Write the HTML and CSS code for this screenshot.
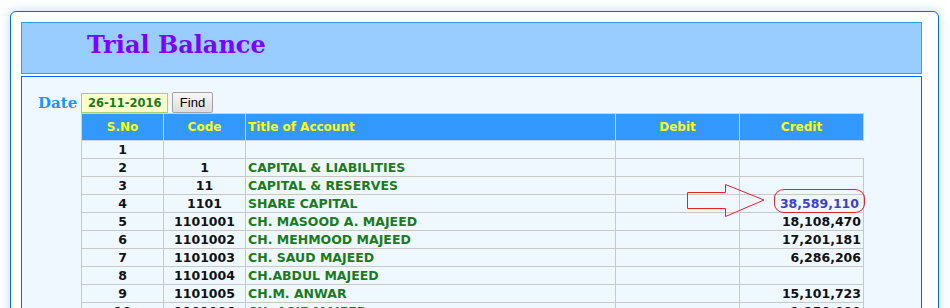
FILE: index.html
```html
<!DOCTYPE html>
<html lang="en">
<head>
    <meta charset="UTF-8">
    <meta name="viewport" content="width=device-width, initial-scale=1.0">
    <title>Trial Balance</title>
    <link rel="stylesheet" href="styles.css">
</head>
<body>
    <div class="frame">
        <div class="page-head">Trial Balance</div>

        <div class="panel">
            <div class="toolbar">
                <label for="date" class="date-label">Date</label>
                <input type="text" id="date" class="date-input" value="26-11-2016">
                <button class="btn-find">Find</button>
            </div>

            <table class="ledger">
                <thead>
                    <tr>
                        <th class="c-no">S.No</th>
                        <th class="c-code">Code</th>
                        <th class="c-title">Title of Account</th>
                        <th class="c-amt">Debit</th>
                        <th class="c-amt">Credit</th>
                    </tr>
                </thead>
                <tbody>
                    <tr><td class="num">1</td><td></td><td></td><td></td></tr>
                    <tr><td class="num">2</td><td class="num">1</td><td class="title">CAPITAL &amp; LIABILITIES</td><td></td><td></td></tr>
                    <tr><td class="num">3</td><td class="num">11</td><td class="title">CAPITAL &amp; RESERVES</td><td></td><td></td></tr>
                    <tr><td class="num">4</td><td class="num">1101</td><td class="title">SHARE CAPITAL</td><td></td><td class="amt total">38,589,110</td></tr>
                    <tr><td class="num">5</td><td class="num">1101001</td><td class="title">CH. MASOOD A. MAJEED</td><td></td><td class="amt">18,108,470</td></tr>
                    <tr><td class="num">6</td><td class="num">1101002</td><td class="title">CH. MEHMOOD MAJEED</td><td></td><td class="amt">17,201,181</td></tr>
                    <tr><td class="num">7</td><td class="num">1101003</td><td class="title">CH. SAUD MAJEED</td><td></td><td class="amt">6,286,206</td></tr>
                    <tr><td class="num">8</td><td class="num">1101004</td><td class="title">CH.ABDUL MAJEED</td><td></td><td></td></tr>
                    <tr><td class="num">9</td><td class="num">1101005</td><td class="title">CH.M. ANWAR</td><td></td><td class="amt">15,101,723</td></tr>
                    <tr><td class="num">10</td><td class="num">1101006</td><td class="title">CH. ASIF MAJEED</td><td></td><td class="amt">1,250,000</td></tr>
                </tbody>
            </table>

            <!-- annotation drawn over the table -->
            <svg class="mark-arrow" width="80" height="35" viewBox="0 0 80 35">
                <polygon points="1.5,9.5 39.5,9.5 39.5,1.5 78,17 39.5,33.5 39.5,25.5 1.5,25.5" fill="none" stroke="#e8202a" stroke-width="1"/>
            </svg>
            <div class="mark-ring"></div>
        </div>
    </div>
</body>
</html>
```

FILE: styles.css
```css
body { margin: 0; background: #fff; font-family: "DejaVu Sans", Verdana, sans-serif; }
.frame { width: 901px; height: 330px; margin: 11px 0 0 10px; padding: 10px 16px 0 10px; border: 1px solid #0066ff; border-radius: 6px; background: #fff; box-shadow: 0 0 10px 2px rgba(120, 190, 225, 0.35); }
.page-head { height: 50px; line-height: 44px; padding-left: 65px; border: 1px solid #3399ff; background: #99ccff; color: #8000ff; font-family: "DejaVu Serif", Georgia, serif; font-weight: bold; font-size: 24px; }
.panel { position: relative; margin-top: 2px; height: 260px; padding: 15px 0 0 16px; border: 1px solid #0066ff; background: #f0f8ff; overflow: hidden; }
.toolbar { display: flex; align-items: center; height: 21px; }
.date-label { width: 43px; color: #1e90ff; font-family: "DejaVu Serif", Georgia, serif; font-weight: bold; font-size: 15px; }
.date-input { box-sizing: border-box; width: 87px; height: 20px; margin: 0 4px 0 0; padding: 0 0 0 6px; border: 1px solid #a8d070; background: #ffffcc; color: #1b7a1b; font-family: "DejaVu Sans", Verdana, sans-serif; font-weight: bold; font-size: 11.5px; outline: none; }
.btn-find { box-sizing: border-box; width: 41px; height: 21px; padding: 0; border: 1px solid #a3a3a3; border-radius: 2px; background: linear-gradient(#f7f7f7, #dddddd); color: #000; font-family: "Liberation Sans", Arial, sans-serif; font-size: 13px; }
.ledger { margin: 0 0 0 43px; width: 783px; border-collapse: collapse; table-layout: fixed; font-weight: bold; }
.ledger th, .ledger td { border: 1px solid #c8c8c8; padding: 0 2px; white-space: nowrap; overflow: hidden; }
.ledger th { height: 26px; background: #3399ff; color: #ffff00; font-size: 12px; text-align: center; border-color: #c8d4e0; }
.ledger th.c-title { text-align: left; }
.c-no, .c-code { width: 77px; }
.c-title { width: 365px; }
.c-amt { width: 119px; }
.ledger td { height: 17px; font-size: 12.5px; color: #111; line-height: 17px; }
.ledger td.num { text-align: center; }
.ledger td.title { color: #1b7a1b; }
.ledger td.amt { text-align: right; }
.ledger td.total { color: #4040c8; padding-right: 4px; }
.mark-arrow { position: absolute; left: 664px; top: 106px; }
.mark-ring { position: absolute; left: 752px; top: 112px; width: 89px; height: 22px; border: 1px solid #e8202a; border-radius: 10px / 9px; }
```
